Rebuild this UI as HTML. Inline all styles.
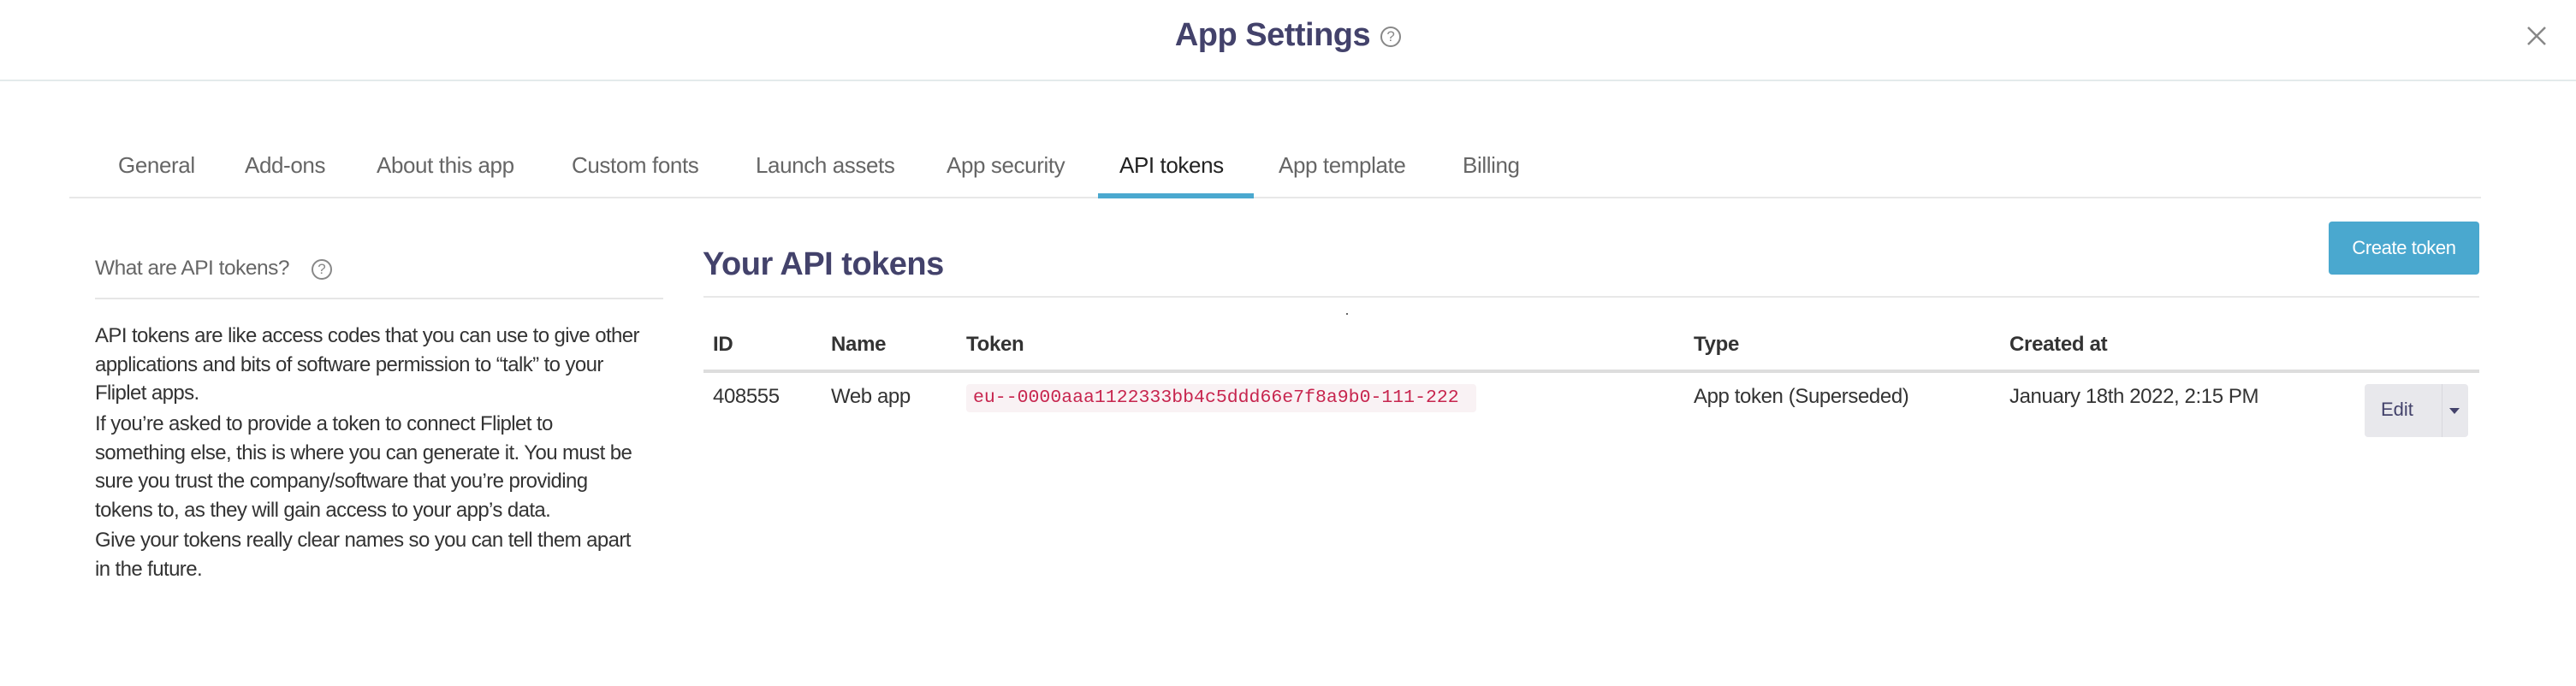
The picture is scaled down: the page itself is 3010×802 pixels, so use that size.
<!DOCTYPE html>
<html><head><meta charset="utf-8"><style>
*{box-sizing:border-box;margin:0;padding:0}
body{width:3010px;height:802px;background:#fff;font-family:"Liberation Sans",sans-serif;position:relative;overflow:hidden;color:#333}
.a{position:absolute;white-space:nowrap}
.title{left:0;width:3010px;text-align:center;top:20px;font-size:38px;font-weight:bold;color:#43426b;letter-spacing:-0.5px}
.q{display:inline-block;width:24px;height:24px;border:2px solid #888;border-radius:50%;font-size:17px;line-height:20px;text-align:center;color:#888;font-weight:normal;vertical-align:middle;margin-left:12px;letter-spacing:0}
.tab{top:178px;font-size:26px;color:#666;letter-spacing:-0.4px}
.p{left:111px;font-size:24px;line-height:33.5px;color:#333;letter-spacing:-0.6px}
.th{top:389px;font-size:24px;font-weight:bold;color:#333;letter-spacing:-0.3px}
.td{top:450px;font-size:24px;color:#333;letter-spacing:-0.4px}
</style></head><body>
<div class="a title">App Settings<span class="q">?</span></div>
<div class="a" style="left:2944px;top:22px;width:40px;height:40px">
<svg width="40" height="40"><path d="M10 10L30 30M30 10L10 30" stroke="#888" stroke-width="2.5"/></svg></div>
<div class="a" style="left:0;top:93px;width:3010px;height:2px;background:#e3eaeb"></div>

<div class="a tab" style="left:138px">General</div>
<div class="a tab" style="left:286px">Add-ons</div>
<div class="a tab" style="left:440px">About this app</div>
<div class="a tab" style="left:668px">Custom fonts</div>
<div class="a tab" style="left:883px">Launch assets</div>
<div class="a tab" style="left:1106px">App security</div>
<div class="a tab" style="left:1308px;color:#222">API tokens</div>
<div class="a tab" style="left:1494px">App template</div>
<div class="a tab" style="left:1709px">Billing</div>
<div class="a" style="left:81px;top:230px;width:2818px;height:2px;background:#e8e8e8"></div>
<div class="a" style="left:1283px;top:226px;width:182px;height:6px;background:#4aa8cf"></div>

<div class="a" style="left:111px;top:300px;font-size:24.5px;color:#666;letter-spacing:-0.5px">What are API tokens?<span class="q" style="margin-left:26px">?</span></div>
<div class="a" style="left:111px;top:348px;width:664px;height:2px;background:#e6e6e6"></div>
<div class="a p" style="top:376px">API tokens are like access codes that you can use to give other<br>applications and bits of software permission to “talk” to your<br>Fliplet apps.</div>
<div class="a p" style="top:479px">If you’re asked to provide a token to connect Fliplet to<br>something else, this is where you can generate it. You must be<br>sure you trust the company/software that you’re providing<br>tokens to, as they will gain access to your app’s data.</div>
<div class="a p" style="top:615px">Give your tokens really clear names so you can tell them apart<br>in the future.</div>

<div class="a" style="left:821px;top:288px;font-size:38px;font-weight:bold;color:#43426b;letter-spacing:-0.5px">Your API tokens</div>
<div class="a" style="left:2721px;top:259px;width:176px;height:62px;background:#4aa8cf;border-radius:4px;color:#fff;font-size:22px;text-align:center;line-height:62px;letter-spacing:-0.4px">Create token</div>
<div class="a" style="left:822px;top:346px;width:2075px;height:2px;background:#e8e8e8"></div>
<div class="a" style="left:1573px;top:366px;width:2px;height:2px;background:#666"></div>

<div class="a th" style="left:833px">ID</div>
<div class="a th" style="left:971px">Name</div>
<div class="a th" style="left:1129px">Token</div>
<div class="a th" style="left:1979px">Type</div>
<div class="a th" style="left:2348px">Created at</div>
<div class="a" style="left:822px;top:432px;width:2075px;height:4px;background:#ddd"></div>

<div class="a td" style="left:833px">408555</div>
<div class="a td" style="left:971px">Web app</div>
<div class="a" style="left:1129px;top:449px;width:596px;height:33px;background:#f9f2f4;border-radius:4px;color:#c7254e;font-family:'Liberation Mono',monospace;font-size:21.5px;line-height:33px;padding-left:8px">eu--0000aaa1122333bb4c5ddd66e7f8a9b0-111-222</div>
<div class="a td" style="left:1979px">App token (Superseded)</div>
<div class="a td" style="left:2348px">January 18th 2022, 2:15 PM</div>
<div class="a" style="left:2763px;top:449px;width:121px;height:62px;background:#e8e8ec;border-radius:4px"></div>
<div class="a" style="left:2853px;top:449px;width:1px;height:62px;background:#d8d8de"></div>
<div class="a" style="left:2782px;top:466px;font-size:22px;color:#43426b">Edit</div>
<div class="a" style="left:2862px;top:477px;width:0;height:0;border-left:6px solid transparent;border-right:6px solid transparent;border-top:7px solid #43426b"></div>
</body></html>
